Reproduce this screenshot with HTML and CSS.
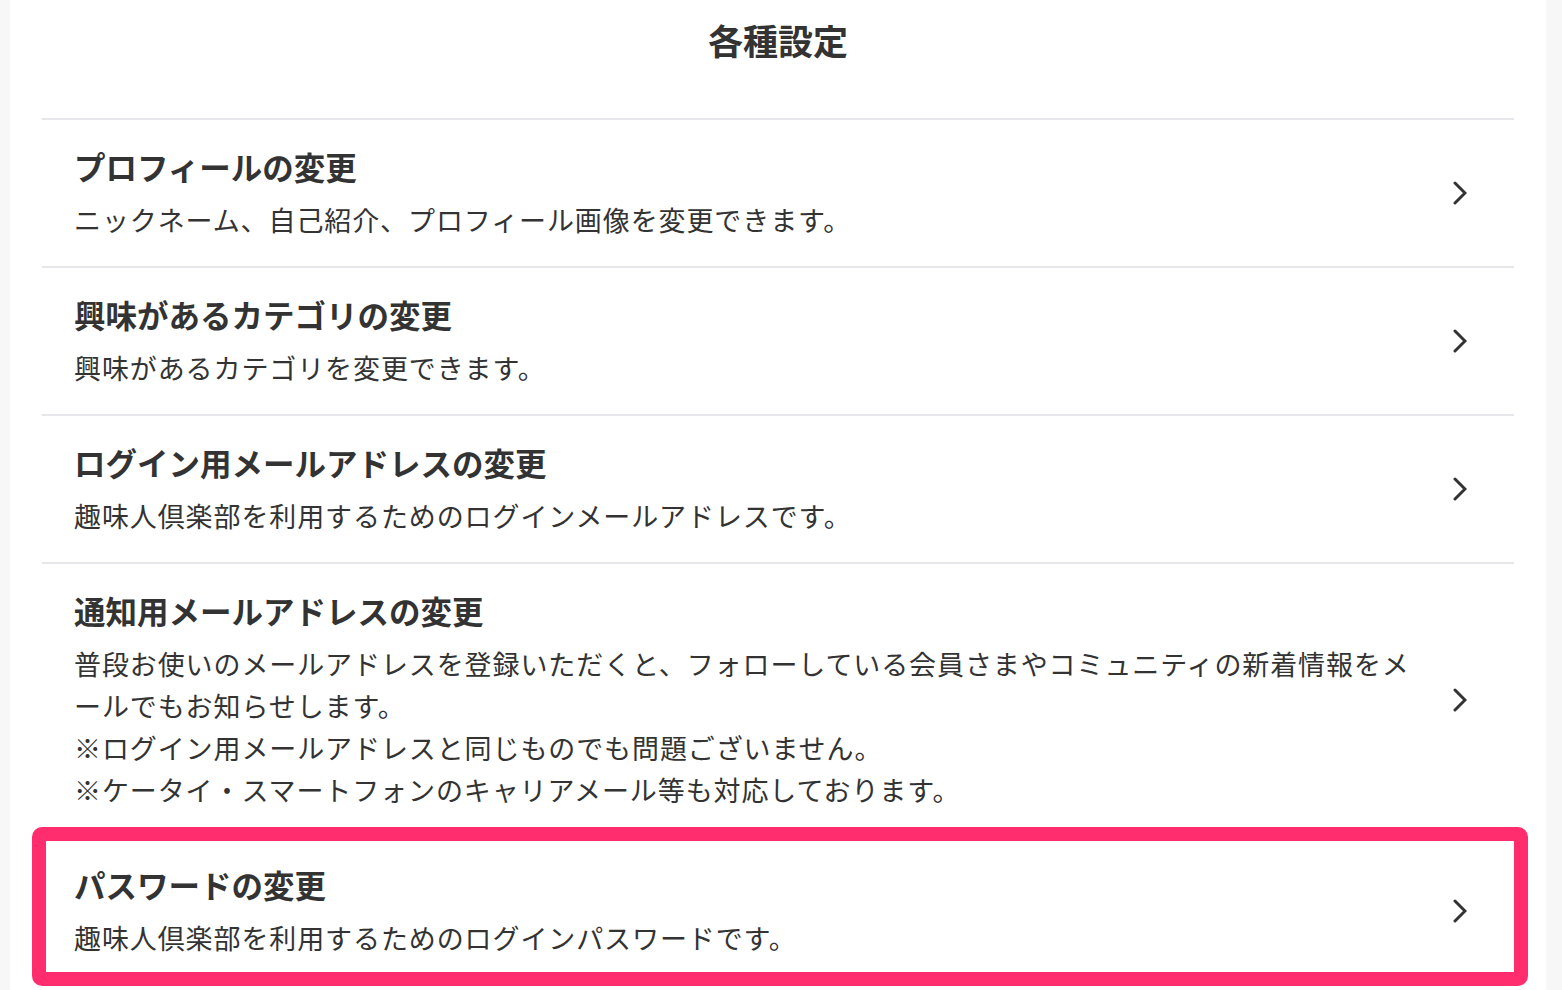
FILE: index.html
```html
<!DOCTYPE html>
<html lang="ja">
<head>
<meta charset="utf-8">
<title>各種設定</title>
<link rel="stylesheet" href="styles.css">
</head>
<body>
<div class="page">
  <header class="page-header">
    <h1 class="page-title">各種設定</h1>
  </header>
  <ul class="settings">
    <li class="row">
      <div class="row-text">
        <p class="row-title">プロフィールの変更</p>
        <p class="row-desc">ニックネーム、自己紹介、プロフィール画像を変更できます。</p>
      </div>
      <svg class="chev" width="14" height="24" viewBox="0 0 14 24"><polyline points="2,2 12,12 2,22" fill="none" stroke="#333" stroke-width="3" stroke-linecap="round" stroke-linejoin="miter"/></svg>
    </li>
    <li class="row">
      <div class="row-text">
        <p class="row-title">興味があるカテゴリの変更</p>
        <p class="row-desc">興味があるカテゴリを変更できます。</p>
      </div>
      <svg class="chev" width="14" height="24" viewBox="0 0 14 24"><polyline points="2,2 12,12 2,22" fill="none" stroke="#333" stroke-width="3" stroke-linecap="round" stroke-linejoin="miter"/></svg>
    </li>
    <li class="row">
      <div class="row-text">
        <p class="row-title">ログイン用メールアドレスの変更</p>
        <p class="row-desc">趣味人倶楽部を利用するためのログインメールアドレスです。</p>
      </div>
      <svg class="chev" width="14" height="24" viewBox="0 0 14 24"><polyline points="2,2 12,12 2,22" fill="none" stroke="#333" stroke-width="3" stroke-linecap="round" stroke-linejoin="miter"/></svg>
    </li>
    <li class="row">
      <div class="row-text">
        <p class="row-title">通知用メールアドレスの変更</p>
        <p class="row-desc">普段お使いのメールアドレスを登録いただくと、フォローしている会員さまやコミュニティの新着情報をメールでもお知らせします。<br>※ログイン用メールアドレスと同じものでも問題ございません。<br>※ケータイ・スマートフォンのキャリアメール等も対応しております。</p>
      </div>
      <svg class="chev" width="14" height="24" viewBox="0 0 14 24"><polyline points="2,2 12,12 2,22" fill="none" stroke="#333" stroke-width="3" stroke-linecap="round" stroke-linejoin="miter"/></svg>
    </li>
    <li class="row row-highlight">
      <div class="row-text">
        <p class="row-title">パスワードの変更</p>
        <p class="row-desc">趣味人倶楽部を利用するためのログインパスワードです。</p>
      </div>
      <svg class="chev" width="14" height="24" viewBox="0 0 14 24"><polyline points="2,2 12,12 2,22" fill="none" stroke="#333" stroke-width="3" stroke-linecap="round" stroke-linejoin="miter"/></svg>
      <span class="highlight-box"></span>
    </li>
  </ul>
</div>
</body>
</html>
```

FILE: styles.css
```css
html, body {
  margin: 0;
  padding: 0;
  background: #f7f7f7;
  height: 990px;
  overflow: hidden;
}
body {
  font-family: "Noto Sans CJK JP", "Noto Sans", sans-serif;
  color: #333;
}
.page {
  margin-left: 10px;
  width: 1536px;
  min-height: 990px;
  background: #fff;
  padding: 0 32px;
  box-sizing: border-box;
}
.page-header {
  height: 118px;
  padding-top: 15px;
  box-sizing: border-box;
}
.page-title {
  margin: 0;
  text-align: center;
  font-size: 35px;
  line-height: 50px;
  font-weight: 700;
  color: #333;
}
.settings {
  list-style: none;
  margin: 0;
  padding: 0;
}
.row {
  position: relative;
  display: grid;
  grid-template-columns: 1fr 14px;
  column-gap: 30px;
  align-items: center;
  border-top: 2px solid #e6e6eb;
  padding: 25px 47px 25px 32px;
}
.row-title {
  margin: 0 0 12px;
  font-size: 31.5px;
  line-height: 42px;
  font-weight: 700;
  color: #333;
}
.row-desc {
  margin: 0;
  font-size: 27px;
  line-height: 42px;
  font-weight: 400;
  letter-spacing: 0.9px;
  color: #333;
  line-break: normal;
}
.chev {
  display: block;
}
.highlight-box {
  position: absolute;
  top: -11px;
  left: -10px;
  right: -14px;
  height: 159px;
  border: 14px solid #ff2d6d;
  border-radius: 10px;
  box-sizing: border-box;
  pointer-events: none;
}
```
